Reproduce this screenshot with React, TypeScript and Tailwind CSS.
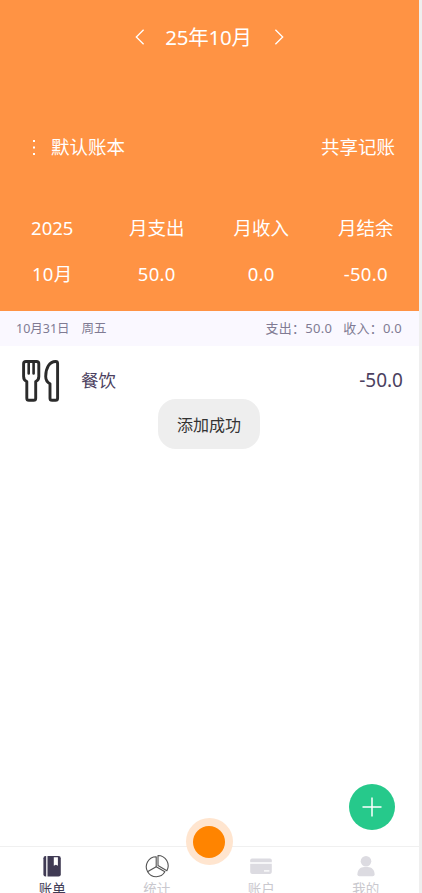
import type { ReactNode } from "react";

interface Summary {
  label: string;
  value: string;
}

interface Tab {
  label: string;
  icon: ReactNode;
  active?: boolean;
}

const SUMMARY: Summary[] = [
  { label: "2025", value: "10月" },
  { label: "月支出", value: "50.0" },
  { label: "月收入", value: "0.0" },
  { label: "月结余", value: "-50.0" },
];

function Chevron({ flip }: { flip?: boolean }) {
  return (
    <svg width="10" height="16" viewBox="0 0 10 16" fill="none" className={flip ? "-scale-x-100" : ""}>
      <path d="M8.6 .7 1.3 8l7.3 7.3" stroke="#fff" strokeWidth="1.3" />
    </svg>
  );
}

function DiningIcon() {
  return (
    <svg width="38" height="42" viewBox="0 0 38 42" fill="none" stroke="#2b2b2b" strokeWidth="2.9" strokeLinejoin="round" strokeLinecap="round">
      <path d="M1.6 3.8Q1.6 1.5 3.9 1.5H14.5Q16.8 1.5 16.8 3.8V16.5Q16.8 20.2 13.7 21.5V38.2Q13.7 40.3 11.6 40.3H6.9Q4.8 40.3 4.8 38.2V21.5Q1.6 20.2 1.6 16.5Z" />
      <path d="M6.7 2V13.5M11.6 2V13.5" strokeWidth="2.6" />
      <path d="M35.6 3.5Q35.6 1.5 33.6 1.5C27.5 1.5 23.7 8 23.7 16.5C23.7 20.5 25.6 22.5 28 23.7V38.2Q28 40.3 30.1 40.3H33.5Q35.6 40.3 35.6 38.2Z" />
    </svg>
  );
}

function BookIcon() {
  return (
    <svg width="24" height="24" viewBox="0 0 24 24">
      <path d="M5.6 2H6.2V22.4H5.6Q3.4 22.4 3.4 20.2V4.2Q3.4 2 5.6 2Z" fill="#403b54" />
      <path d="M7.5 2H18.6Q20.8 2 20.8 4.2V20.2Q20.8 22.4 18.6 22.4H7.5Z" fill="#403b54" />
      <path d="M13.8 3.2H17.9V11.8L15.85 10.8L13.8 11.8Z" fill="#fff" />
    </svg>
  );
}

function PieIcon() {
  return (
    <svg width="24" height="24" viewBox="0 0 24 24" fill="none" stroke="#555" strokeWidth="1.1" strokeLinejoin="round">
      <path d="M11.2 2.7A10 10 0 1 0 19.9 17.8L11.2 12.7Z" />
      <path d="M11.2 12.7 2.5 17.7" />
      <path d="M13 1.5A10.3 10.3 0 0 1 21.9 16.7L13 11.6Z" />
    </svg>
  );
}

function CardIcon() {
  return (
    <svg width="24" height="24" viewBox="0 0 24 24">
      <path d="M3 4.5H21Q22.8 4.5 22.8 6.3V8.3H1.2V6.3Q1.2 4.5 3 4.5Z" fill="#dcdbe1" />
      <path d="M1.2 9.7H22.8V18.1Q22.8 19.9 21 19.9H3Q1.2 19.9 1.2 18.1Z" fill="#dcdbe1" />
      <path d="M15 16.9H20.4" stroke="#fff" strokeWidth="1.3" />
    </svg>
  );
}

function UserIcon() {
  return (
    <svg width="24" height="24" viewBox="0 0 24 24" fill="#dcdbe1">
      <circle cx="12" cy="7.3" r="5.3" />
      <path d="M3.4 20.3C3.4 15.8 6.5 13 10.2 13H13.8C17.5 13 20.6 15.8 20.6 20.3Q20.6 22.3 18.6 22.3H5.4Q3.4 22.3 3.4 20.3Z" />
    </svg>
  );
}

const TABS: Tab[] = [
  { label: "账单", icon: <BookIcon />, active: true },
  { label: "统计", icon: <PieIcon /> },
  { label: "账户", icon: <CardIcon /> },
  { label: "我的", icon: <UserIcon /> },
];

function Header() {
  return (
    <header className="h-[311px] bg-[#ff9344] text-white">
      <div className="flex h-[73px] items-center justify-center gap-[20px]">
        <Chevron />
        <h1 className="pr-[2px] text-[20.5px] leading-7 tracking-[-0.2px]">25年10月</h1>
        <Chevron flip />
      </div>

      <div className="mt-[60px] flex h-7 items-center justify-between pr-[24px] pl-[32px] text-[18.5px]">
        <div className="flex items-center">
          <svg width="4" height="17" viewBox="0 0 4 17" fill="#fff">
            <rect x="1" y="1" width="2" height="2" />
            <rect x="1" y="7.5" width="2" height="2" />
            <rect x="1" y="14" width="2" height="2" />
          </svg>
          <span className="ml-[15px]">默认账本</span>
        </div>
        <span>共享记账</span>
      </div>

      <div className="mt-[53px] grid grid-cols-4 pr-px text-center text-[18.5px] leading-7">
        {SUMMARY.map((s) => (
          <div key={s.label} className="flex flex-col gap-[18px]">
            <span>{s.label}</span>
            <span className="tracking-[0.3px]">{s.value}</span>
          </div>
        ))}
      </div>
    </header>
  );
}

export default function App() {
  return (
    <div className="h-[893px] w-[422px] overflow-hidden bg-[#efefef] font-['Noto_Sans','Noto_Sans_CJK_SC',sans-serif]">
      <div className="relative flex h-full w-[419px] flex-col bg-white">
        <Header />

        <div className="flex h-[35px] shrink-0 items-center justify-between bg-[#faf8ff] pt-px pr-[17px] pl-[16px] text-[12.5px] text-[#807b93]">
          <div className="flex gap-[12px]">
            <span>10月31日</span>
            <span>周五</span>
          </div>
          <div className="flex gap-[11px] text-[13px] tracking-[0.25px]">
            <span>支出：50.0</span>
            <span>收入：0.0</span>
          </div>
        </div>

        <div className="flex h-[69px] shrink-0 items-center pr-[16px] pl-[22px] text-[#4b3f60]">
          <DiningIcon />
          <span className="ml-[21px] text-[17.5px]">餐饮</span>
          <span className="ml-auto text-[19px]">-50.0</span>
        </div>

        <nav className="mt-auto grid h-[47px] shrink-0 grid-cols-4 border-t border-[#f0f0f0] bg-white pr-px">
          {TABS.map((t) => (
            <div key={t.label} className="flex flex-col items-center pt-[7px]">
              {t.icon}
              <span className={`mt-px text-[13.5px] leading-5 ${t.active ? "text-[#403b54]" : "text-[#c9c8ce]"}`}>
                {t.label}
              </span>
            </div>
          ))}
        </nav>

        {/* Toast */}
        <div className="absolute top-[399px] left-[158px] flex h-[50px] w-[102px] items-center justify-center rounded-[18px] bg-[#eee] pt-px text-[16px] text-[#333]">
          添加成功
        </div>

        {/* Add record */}
        <button className="absolute top-[783.5px] left-[349px] flex size-[46px] items-center justify-center rounded-full bg-[#26c98b]">
          <svg width="20" height="20" viewBox="0 0 20 20" stroke="#fff" strokeWidth="1.5">
            <path d="M10 .5V19.5M.5 10H19.5" />
          </svg>
        </button>

        {/* Centre dot over the tab bar */}
        <div className="absolute top-[818px] left-[185.5px] flex size-[47px] items-center justify-center rounded-full bg-[#ffe5cf]">
          <div className="size-8 rounded-full bg-[#ff8400]" />
        </div>
      </div>
    </div>
  );
}
